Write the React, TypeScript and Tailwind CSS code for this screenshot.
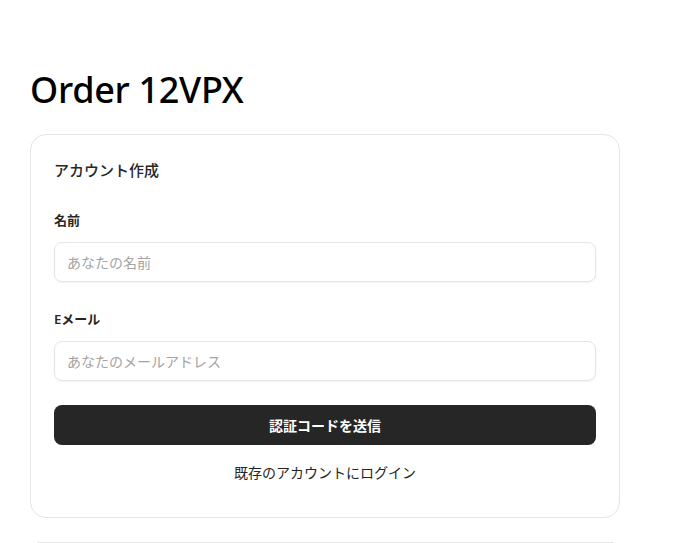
export default function App() {
  return (
    <div className="min-h-screen bg-white font-['Noto_Sans','Noto_Sans_CJK_JP',sans-serif] text-[#0a0a0a]">
      <main className="px-[30px] pt-[64px] w-[650px]">
        <h1 className="text-[36px] leading-[52px] font-medium tracking-[-0.3px] text-black mb-[18px]">Order 12VPX</h1>

        {/* Signup card */}
        <div className="border border-[#e5e5e5] rounded-[16px] px-[23px] pt-[23px] pb-[33px]">
          <h2 className="text-[15px] leading-[24px] font-medium text-[#262626]">アカウント作成</h2>

          <div className="mt-[28px]">
            <label className="block text-[13px] leading-[20px] font-semibold text-[#262626]">名前</label>
            <input
              placeholder="あなたの名前"
              className="mt-[12px] w-full h-[40px] px-[12px] rounded-[8px] border border-[#e5e5e5] shadow-xs text-[14px] placeholder:text-[#a3a3a3] outline-none"
            />
          </div>

          <div className="mt-[27px]">
            <label className="block text-[13px] leading-[20px] font-semibold text-[#262626]">Eメール</label>
            <input
              placeholder="あなたのメールアドレス"
              className="mt-[12px] w-full h-[40px] px-[12px] rounded-[8px] border border-[#e5e5e5] shadow-xs text-[14px] placeholder:text-[#a3a3a3] outline-none"
            />
          </div>

          <button className="mt-[24px] w-full h-[40px] rounded-[8px] bg-[#262626] text-white text-[14px] font-semibold">
            認証コードを送信
          </button>

          <div className="mt-[15px] text-center">
            <a href="#" className="text-[14px] leading-[20px] text-[#262626]">既存のアカウントにログイン</a>
          </div>
        </div>

        <div className="mx-[7px] mt-[24px] border-t border-[#e5e5e5]" />
      </main>
    </div>
  )
}
